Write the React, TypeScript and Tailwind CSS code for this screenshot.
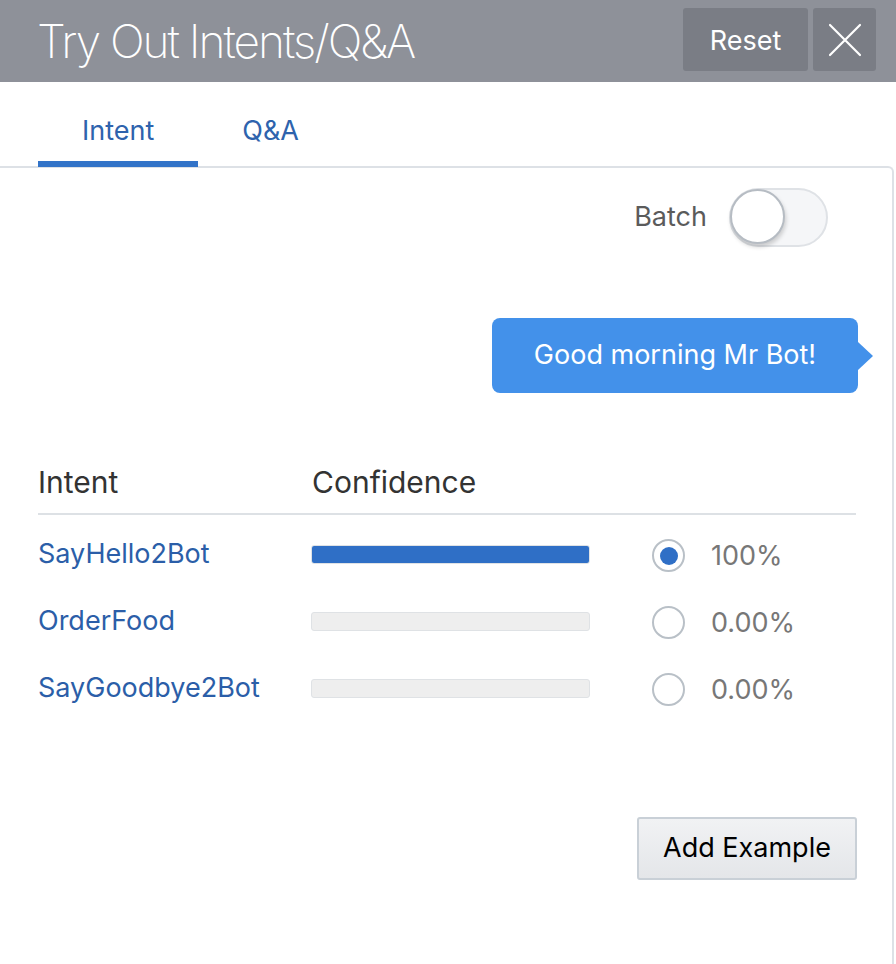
import React from 'react';

const intents = [
  { name: 'SayHello2Bot', score: 1, label: '100%' },
  { name: 'OrderFood', score: 0, label: '0.00%' },
  { name: 'SayGoodbye2Bot', score: 0, label: '0.00%' },
];

const App: React.FC = () => {
  return (
    <div className="w-[896px] h-[964px] bg-white overflow-hidden font-['Inter',sans-serif]">
      {/* Header */}
      <header className="h-[82px] bg-[#8e9199] flex items-start justify-between pl-[37px] pr-[20px]">
        <h1 className="mt-[13px] text-[46px] font-extralight tracking-[-2px] text-white leading-[56px]">
          Try Out Intents/Q&amp;A
        </h1>
        <div className="flex gap-[5px] mt-[8px]">
          <button className="w-[125px] h-[63px] rounded-[3px] bg-[#7a7d85] text-white text-[27px] font-normal pt-[4px]">
            Reset
          </button>
          <button className="w-[63px] h-[63px] rounded-[3px] bg-[#7a7d85] flex items-center justify-center">
            <svg width="34" height="34" viewBox="0 0 34 34" fill="none" stroke="white" strokeWidth="2.2" strokeLinecap="round">
              <path d="M2 2L32 32M32 2L2 32" />
            </svg>
          </button>
        </div>
      </header>

      {/* Tabs */}
      <nav className="flex pl-[38px] h-[85px] items-end">
        <div className="px-[44px] pb-[14px] border-b-[6px] border-[#3273c8] text-[27px] text-[#2e63ad] leading-[32px] relative z-10">
          Intent
        </div>
        <div className="px-[44px] pb-[14px] border-b-[6px] border-transparent text-[27px] text-[#2e63ad] leading-[32px]">
          Q&amp;A
        </div>
      </nav>

      {/* Panel */}
      <main className="-mt-[1px] mr-[2px] border-t-2 border-r-2 border-[#dde1e6] rounded-tr-[6px] h-[800px] px-[38px]">
        <div className="flex justify-end items-center gap-[22px] mt-[20px] pr-[26px]">
          <span className="text-[27px] text-[#5b5b5b]">Batch</span>
          <div className="w-[99px] h-[59px] rounded-full bg-[#f5f6f8] border-2 border-[#dfe2e6] relative">
            <div className="absolute -left-[1px] -top-[1px] w-[55px] h-[55px] rounded-full bg-white border-2 border-[#b6bcc3] shadow-[1px_3px_4px_rgba(0,0,0,0.18)]" />
          </div>
        </div>

        {/* Message bubble */}
        <div className="flex justify-end mt-[71px] -mr-[4px]">
          <div className="relative bg-[#4391ea] rounded-[8px] w-[366px] h-[75px] flex items-center justify-center text-white text-[27px]">
            Good morning Mr Bot!
            <div className="absolute -right-[15px] top-[24px] w-0 h-0 border-y-[14px] border-y-transparent border-l-[15px] border-l-[#4391ea]" />
          </div>
        </div>

        {/* Results table */}
        <div className="mt-[72px] -mr-[2px]">
          <div className="flex items-end h-[50px] pb-[14px] border-b-2 border-[#dde1e5] text-[30px] text-[#333] leading-[34px]">
            <div className="w-[274px]">Intent</div>
            <div>Confidence</div>
          </div>
          <div className="pt-[22px] flex flex-col gap-[33px]">
            {intents.map((it, i) => (
              <div key={it.name} className="flex items-center h-[34px]">
                <div className="w-[273px] text-[27px] text-[#2b5ea8]">{it.name}</div>
                <div className="w-[279px] h-[19px] rounded-[3px] bg-[#eeeeee] border border-[#dfe2e5] overflow-hidden">
                  <div className="h-full bg-[#2f6fc6]" style={{ width: `${it.score * 100}%` }} />
                </div>
                <div className="ml-[62px] w-[33px] h-[33px] rounded-full border-2 border-[#b9c0c7] flex items-center justify-center bg-white mt-[3px]">
                  {i === 0 && <div className="w-[18px] h-[18px] rounded-full bg-[#2f6fc6]" />}
                </div>
                <div className="ml-[26px] text-[27px] text-[#777] mt-[5px]">{it.label}</div>
              </div>
            ))}
          </div>
        </div>

        <div className="flex justify-end mt-[112px] -mr-[3px]">
          <button className="w-[220px] h-[63px] rounded-[3px] border-2 border-[#c9d0d7] bg-gradient-to-b from-[#f1f2f4] to-[#e4e6e9] text-[27px] text-black">
            Add Example
          </button>
        </div>
      </main>
    </div>
  );
};

export default App;
